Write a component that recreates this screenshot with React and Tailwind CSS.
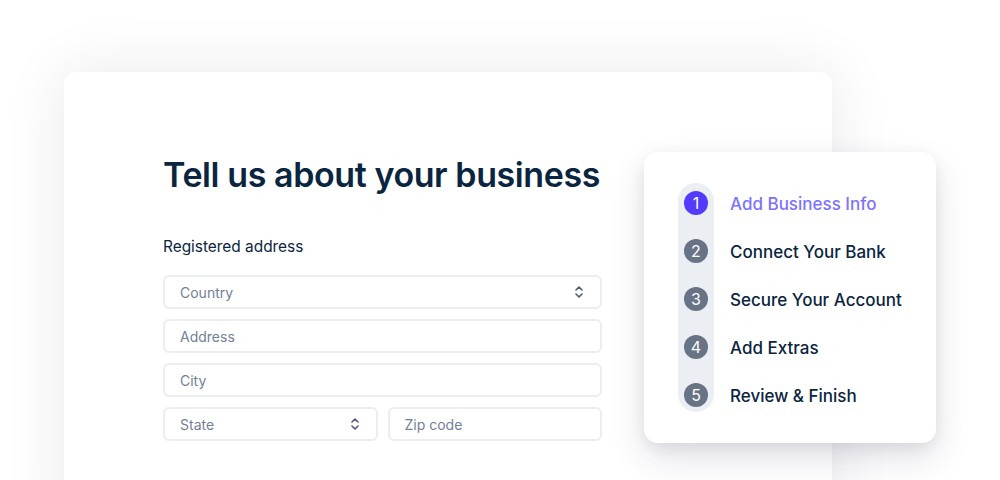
import React from 'react';

const Chevrons = () => (
  <svg width="10" height="14" viewBox="0 0 10 14" fill="none" stroke="#4f5b76" strokeWidth="1.6" strokeLinecap="round" strokeLinejoin="round">
    <path d="M2 5l3-3 3 3" />
    <path d="M2 9l3 3 3-3" />
  </svg>
);

const Field = ({ label, select, className = '' }) => (
  <div className={`flex h-[34px] items-center justify-between rounded-md border-2 border-[#eaedf1] bg-white pl-[15px] pr-4 ${className}`}>
    <span className="text-[14px] text-[#727f96]">{label}</span>
    {select && <Chevrons />}
  </div>
);

const steps = ['Add Business Info', 'Connect Your Bank', 'Secure Your Account', 'Add Extras', 'Review & Finish'];

const App = () => {
  return (
    <div className="relative h-[480px] w-[1000px] overflow-hidden bg-white pl-16 pt-[72px]" style={{ fontFamily: 'Inter, "Noto Sans", sans-serif' }}>
      <div className="h-[460px] w-[768px] rounded-xl bg-white pl-[99px] pt-[86px] shadow-[0_0_60px_rgba(30,40,60,0.1)]">
        <h1 className="text-[34px] font-semibold leading-none tracking-[-0.012em] text-[#0a2540]">Tell us about your business</h1>
        <p className="mt-[45px] text-[15.4px] leading-5 text-[#0a2540]">Registered address</p>
        <div className="mt-[18px] flex w-[439px] flex-col gap-[10px]">
          <Field label="Country" select />
          <Field label="Address" />
          <Field label="City" />
          <div className="flex gap-[10px]">
            <Field label="State" select className="flex-1" />
            <Field label="Zip code" className="flex-1" />
          </div>
        </div>
      </div>

      <div className="absolute left-[644px] top-[152px] h-[291px] w-[292px] rounded-[14px] bg-white pl-[34px] pt-[31px] shadow-[0_15px_35px_rgba(50,50,93,0.14),0_5px_15px_rgba(0,0,0,0.07)]">
        <div className="relative">
          <div className="absolute left-0 top-0 h-[229px] w-[36px] rounded-full bg-[#ebeef2]" />
          <ul className="relative flex flex-col gap-[24px] pt-[8px]">
            {steps.map((s, i) => (
              <li key={s} className="flex h-6 items-center gap-[22px] pl-[6px]">
                <span className={`flex h-6 w-6 items-center justify-center rounded-full text-[16px] leading-none text-white ${i === 0 ? 'bg-[#533afd]' : 'bg-[#687385]'}`}>{i + 1}</span>
                <span className={`pt-[2px] text-[17px] font-medium leading-6 ${i === 0 ? 'text-[#7a73ff]' : 'text-[#0a2540]'}`}>{s}</span>
              </li>
            ))}
          </ul>
        </div>
      </div>
    </div>
  );
};

export default App;
